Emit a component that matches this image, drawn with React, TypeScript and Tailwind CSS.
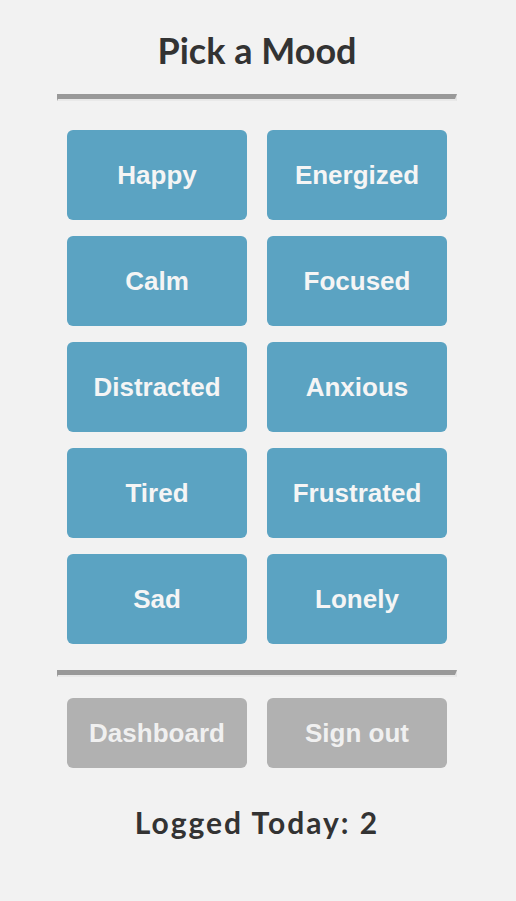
import React from "react";

const moods = [
  "Happy",
  "Energized",
  "Calm",
  "Focused",
  "Distracted",
  "Anxious",
  "Tired",
  "Frustrated",
  "Sad",
  "Lonely",
];

function Rule() {
  return (
    <div className="w-[400px] h-[7px] border-t-[5px] border-l-[1px] border-r-[2px] border-b-[2px] border-t-[#999999] border-l-[#999999] border-r-[#e4e4e4] border-b-[#e9e9e9]" />
  );
}

export default function App() {
  return (
    <div className="min-h-[901px] w-full bg-[#f2f2f2] flex flex-col items-center pr-[2px]">
      <h1
        className="mt-[28px] text-[36px] leading-[44px] font-bold text-[#333333]"
        style={{ fontFamily: "Lato, 'Noto Sans', sans-serif" }}
      >
        Pick a Mood
      </h1>
      <div className="mt-[22px]">
        <Rule />
      </div>
      <div className="mt-[29px] grid grid-cols-[180px_180px] gap-x-[20px] gap-y-[16px]">
        {moods.map((m) => (
          <button
            key={m}
            className="h-[90px] rounded-[6px] bg-[#5ba3c2] text-[#f5f5f5] text-[26px] font-bold"
            style={{ fontFamily: "'Liberation Sans', Arial, sans-serif" }}
          >
            {m}
          </button>
        ))}
      </div>
      <div className="mt-[26px]">
        <Rule />
      </div>
      <div className="mt-[21px] grid grid-cols-[180px_180px] gap-x-[20px]">
        {["Dashboard", "Sign out"].map((m) => (
          <button
            key={m}
            className="h-[70px] rounded-[6px] bg-[#b1b1b1] text-[#f0f0f0] text-[26px] font-bold"
            style={{ fontFamily: "'Liberation Sans', Arial, sans-serif" }}
          >
            {m}
          </button>
        ))}
      </div>
      <p
        className="mt-[32px] text-[30px] leading-[44px] font-bold tracking-[2px] text-[#333333]"
        style={{ fontFamily: "Lato, 'Noto Sans', sans-serif" }}
      >
        Logged Today: 2
      </p>
    </div>
  );
}
